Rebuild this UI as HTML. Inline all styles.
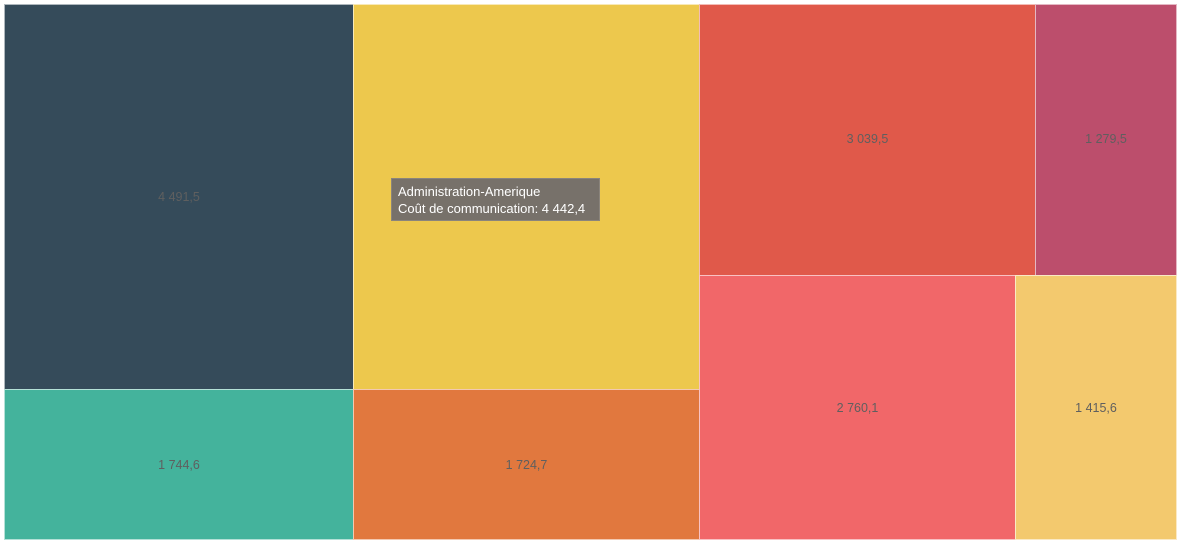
<!DOCTYPE html>
<html><head><meta charset="utf-8"><style>
body{margin:0;width:1183px;height:542px;background:#fff;position:relative;overflow:hidden;font-family:"Liberation Sans",sans-serif}
.r{position:absolute;box-sizing:border-box;border:1px solid rgba(255,255,255,0.6);color:#5f5f5f;font-size:12.5px;display:flex;align-items:center;justify-content:center}
.tt{position:absolute;left:391px;top:178px;width:209px;height:43px;background:#77716a;color:#fff;font-size:13px;line-height:17px;box-sizing:border-box;padding:4px 6px;border:1px solid #8a847c}
</style></head><body>
<div class="r" style="left:4px;top:4px;width:350px;height:386px;background:#354b5a">4 491,5</div>
<div class="r" style="left:4px;top:389px;width:350px;height:151px;background:#44b39c">1 744,6</div>
<div class="r" style="left:353px;top:4px;width:347px;height:386px;background:#edc84d"></div>
<div class="r" style="left:353px;top:389px;width:347px;height:151px;background:#e1783e">1 724,7</div>
<div class="r" style="left:699px;top:4px;width:337px;height:272px;background:#e0594a;align-items:flex-start;padding-top:127px">3 039,5</div>
<div class="r" style="left:1035px;top:4px;width:142px;height:272px;background:#bc4e6c;align-items:flex-start;padding-top:127px">1 279,5</div>
<div class="r" style="left:699px;top:275px;width:317px;height:265px;background:#f16769">2 760,1</div>
<div class="r" style="left:1015px;top:275px;width:162px;height:265px;background:#f3c96e">1 415,6</div>
<div class="tt">Administration-Amerique<br>Coût de communication: 4 442,4</div>
</body></html>
